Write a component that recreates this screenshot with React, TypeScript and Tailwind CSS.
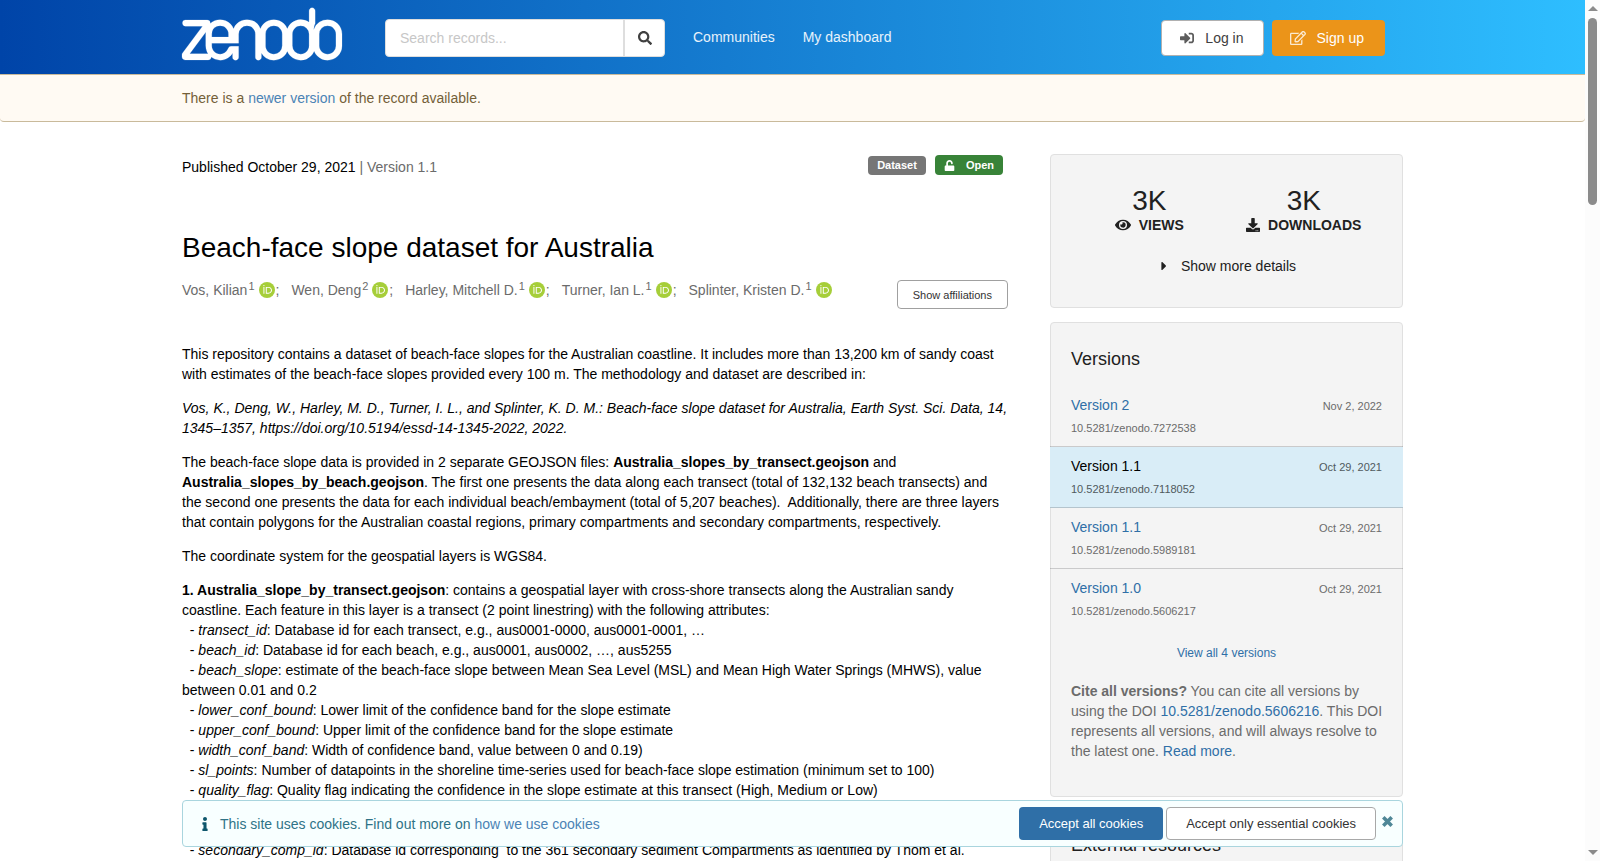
import { FaSearch, FaSignInAlt, FaRegEdit, FaUnlock, FaEye, FaDownload, FaCaretRight, FaInfo } from 'react-icons/fa';
import { SiZenodo } from 'react-icons/si';

const creators = [
  { name: 'Vos, Kilian', affiliation: 1 },
  { name: 'Wen, Deng', affiliation: 2 },
  { name: 'Harley, Mitchell D.', affiliation: 1 },
  { name: 'Turner, Ian L.', affiliation: 1 },
  { name: 'Splinter, Kristen D.', affiliation: 1 },
];

const transectFields = [
  { field: 'transect_id', text: 'Database id for each transect, e.g., aus0001-0000, aus0001-0001, …' },
  { field: 'beach_id', text: 'Database id for each beach, e.g., aus0001, aus0002, …, aus5255' },
  { field: 'beach_slope', text: 'estimate of the beach-face slope between Mean Sea Level (MSL) and Mean High Water Springs (MHWS), value between 0.01 and 0.2' },
  { field: 'lower_conf_bound', text: 'Lower limit of the confidence band for the slope estimate' },
  { field: 'upper_conf_bound', text: 'Upper limit of the confidence band for the slope estimate' },
  { field: 'width_conf_band', text: 'Width of confidence band, value between 0 and 0.19)' },
  { field: 'sl_points', text: 'Number of datapoints in the shoreline time-series used for beach-face slope estimation (minimum set to 100)' },
  { field: 'quality_flag', text: 'Quality flag indicating the confidence in the slope estimate at this transect (High, Medium or Low)' },
  { field: 'region_id', text: 'Database id of the coastal region' },
  { field: 'primary_comp_id', text: 'Database id of the primary sediment compartment' },
  { field: 'secondary_comp_id', text: 'Database id corresponding\u00a0 to the 361 secondary sediment Compartments as identified by Thom et al.' },
];

const versions = [
  { label: 'Version 2', date: 'Nov 2, 2022', doi: '10.5281/zenodo.7272538' },
  { label: 'Version 1.1', date: 'Oct 29, 2021', doi: '10.5281/zenodo.7118052', active: true },
  { label: 'Version 1.1', date: 'Oct 29, 2021', doi: '10.5281/zenodo.5989181' },
  { label: 'Version 1.0', date: 'Oct 29, 2021', doi: '10.5281/zenodo.5606217' },
];

function OrcidIcon() {
  return (
    <svg viewBox="0 0 256 256" className="inline-block size-4" aria-label="ORCID">
      <circle cx="128" cy="128" r="128" fill="#A6CE39" />
      <g fill="#fff">
        <path d="M86.3 186.2H70.9V79.1h15.4v107.1z" />
        <path d="M108.9 79.1h41.6c39.6 0 57 28.3 57 53.6 0 27.5-21.5 53.6-56.8 53.6h-41.8V79.1zm15.4 93.3h24.5c34.9 0 42.9-26.5 42.9-39.7 0-21.5-13.7-39.7-43.7-39.7h-23.7v79.4z" />
        <circle cx="78.6" cy="56.8" r="10.1" />
      </g>
    </svg>
  );
}

function Header() {
  return (
    <header className="bg-[linear-gradient(90deg,rgb(0,68,168),rgb(46,190,255))]">
      <div className="mx-auto flex h-[74px] max-w-[1221px] items-center">
        <a href="#" aria-label="Zenodo" className="mr-[43px] mb-1.5 text-white">
          <SiZenodo viewBox="0 8.1 24 7.8" strokeWidth={0.03} className="h-[52px] w-40 overflow-visible" />
        </a>
        <form className="mt-0.5 flex h-[38px] w-[280px] overflow-hidden rounded border border-[#dedede] bg-white">
          <input
            type="text"
            aria-label="Search records"
            placeholder="Search records..."
            className="min-w-0 flex-1 px-3.5 text-sm outline-none placeholder:text-[#c7c7c7]"
          />
          <button type="button" aria-label="Search" className="flex w-[41px] items-center justify-center border-l-2 border-[#dedede] text-[#404040]">
            <FaSearch className="size-3.5" />
          </button>
        </form>
        <nav className="ml-7 flex gap-7 text-sm text-white/90">
          <a href="#">Communities</a>
          <a href="#">My dashboard</a>
        </nav>
        <div className="mt-0.5 mr-[18px] ml-auto flex gap-2 text-sm">
          <button className="flex h-9 items-center gap-[11px] rounded border border-[#b0b0b0] bg-white pr-[19px] pl-[18px] text-[#404040]">
            <FaSignInAlt className="size-3.5 text-[#5c5c5c]" />
            Log in
          </button>
          <button className="flex h-9 items-center gap-[11px] rounded bg-[#eb9419] pr-[21px] pl-[18px] text-white">
            <FaRegEdit className="size-4 text-white/80" />
            Sign up
          </button>
        </div>
      </div>
    </header>
  );
}

function RecordHeader() {
  return (
    <>
      <div className="flex items-start justify-between pr-[5px]">
        <p className="mt-[3px] text-[#6b6b6b]">
          <span className="text-black">Published October 29, 2021</span> | Version 1.1
        </p>
        <div className="mt-px flex items-end gap-[9px] text-[11px] leading-[11px] font-bold text-white">
          <span className="rounded bg-[#767676] px-[9px] py-1">Dataset</span>
          <span className="flex h-5 items-center rounded bg-[#388338] px-[9px]">
            <FaUnlock className="mr-[11px] size-[11px]" />
            Open
          </span>
        </div>
      </div>

      <h1 className="mt-[53px] text-[28px] leading-9">Beach-face slope dataset for Australia</h1>

      <div className="mt-3.5 flex items-start justify-between">
        <ul className="flex gap-3 text-[#6b6b6b]">
          {creators.map((creator, i) => (
            <li key={creator.name} className="flex items-center">
              <a href="#">
                {creator.name}
                <sup className="ml-px text-[11px]">{creator.affiliation}</sup>
              </a>
              <a href="#" className="ml-1 flex">
                <OrcidIcon />
              </a>
              {i < creators.length - 1 && <span className="ml-px">;</span>}
            </li>
          ))}
        </ul>
        <button className="h-[29px] rounded border border-[#a0a0a0] px-[15px] text-[11px] text-[#333]">Show affiliations</button>
      </div>
    </>
  );
}

function Description() {
  return (
    <section className="mt-[35px] space-y-3.5">
      <p>
        This repository contains a dataset of beach-face slopes for the Australian coastline. It includes more than 13,200 km of
        sandy coast with estimates of the beach-face slopes provided every 100 m. The methodology and dataset are described in:
      </p>
      <p>
        <em>
          Vos, K., Deng, W., Harley, M. D., Turner, I. L., and Splinter, K. D. M.: Beach-face slope dataset for Australia, Earth
          Syst. Sci. Data, 14, 1345–1357, https://doi.org/10.5194/essd-14-1345-2022, 2022.
        </em>
      </p>
      <p>
        The beach-face slope data is provided in 2 separate GEOJSON files: <strong>Australia_slopes_by_transect.geojson</strong>{' '}
        and <strong>Australia_slopes_by_beach.geojson</strong>. The first one presents the data along each transect (total of
        132,132 beach transects) and the second one presents the data for each individual beach/embayment (total of 5,207
        beaches).&nbsp; Additionally, there are three layers that contain polygons for the Australian coastal regions, primary
        compartments and secondary compartments, respectively.
      </p>
      <p>The coordinate system for the geospatial layers is WGS84.</p>
      <div>
        <p>
          <strong>1. Australia_slope_by_transect.geojson</strong>: contains a geospatial layer with cross-shore transects along
          the Australian sandy coastline. Each feature in this layer is a transect (2 point linestring) with the following
          attributes:
        </p>
        {transectFields.map(({ field, text }) => (
          <p key={field}>
            &nbsp;&nbsp;- <em>{field}</em>: {text}
          </p>
        ))}
      </div>
    </section>
  );
}

function Sidebar() {
  return (
    <aside className="w-[353px] shrink-0 space-y-3.5 text-[#212121]">
      <section className="rounded border border-[#e0e0e0] bg-[#f4f4f4] px-[21px] pt-8 pb-[31px]">
        <div className="grid grid-cols-2 text-center">
          <div>
            <div className="text-[28px] leading-7">3K</div>
            <div className="flex items-center justify-center gap-2 font-bold">
              <FaEye className="size-4" />
              VIEWS
            </div>
          </div>
          <div>
            <div className="text-[28px] leading-7">3K</div>
            <div className="flex items-center justify-center gap-2 font-bold">
              <FaDownload className="size-3.5" />
              DOWNLOADS
            </div>
          </div>
        </div>
        <button className="mx-auto mt-[21px] flex items-center gap-2.5">
          <FaCaretRight className="size-3.5" />
          Show more details
        </button>
      </section>

      <section className="rounded border border-[#e0e0e0] bg-[#f4f4f4] pt-6 pb-[35px]">
        <h2 className="px-5 text-lg leading-6">Versions</h2>
        <ul className="mt-[15px]">
          {versions.map((version, i) => (
            <li
              key={version.doi}
              className={`-mx-px px-[21px] py-[9px] ${version.active ? 'bg-[#d9edf7]' : ''} ${i < versions.length - 1 ? 'border-b border-[#22242633]' : ''}`}
            >
              <div className="flex items-baseline justify-between">
                <a href="#" className={version.active ? 'text-black' : 'text-[#2f6fa7]'}>
                  {version.label}
                </a>
                <small className={`text-[11px] ${version.active ? 'text-[#505a5e]' : 'text-[#6b6b6b]'}`}>{version.date}</small>
              </div>
              <a href="#" className={`mt-[3px] block text-[11px] leading-[18px] ${version.active ? 'text-[#505a5e]' : 'text-[#6b6b6b]'}`}>
                {version.doi}
              </a>
            </li>
          ))}
        </ul>
        <div className="mt-3.5 text-center text-xs leading-5">
          <a href="#" className="text-[#2f6fa7]">View all 4 versions</a>
        </div>
        <p className="mt-[18px] pr-4 pl-5 text-[#6b6b6b]">
          <strong>Cite all versions?</strong> You can cite all versions by using the DOI{' '}
          <a href="#" className="text-[#2f6fa7]">10.5281/zenodo.5606216</a>. This DOI represents all versions, and will always
          resolve to the latest one. <a href="#" className="text-[#2f6fa7]">Read more</a>.
        </p>
      </section>

      <section className="rounded border border-[#e0e0e0] bg-[#f4f4f4] px-5 pt-[21px] pb-10">
        <h2 className="text-lg leading-6">External resources</h2>
      </section>
    </aside>
  );
}

function CookieBanner() {
  return (
    <div className="absolute inset-x-0 bottom-3.5">
      <div className="mx-auto flex h-[47px] max-w-[1221px] items-center rounded border border-[#a9d5de] bg-[#f8ffff] pr-[9px] pl-[15px] text-[#2f7387]">
        <FaInfo className="mr-2 size-3.5 text-[#0e566c]" />
        <p>
          This site uses cookies. Find out more on <a href="#" className="text-[#4b83b5]">how we use cookies</a>
        </p>
        <div className="ml-auto flex gap-[3px] text-[13px]">
          <button className="h-[33px] rounded bg-[#2f6fa7] px-5 text-white">Accept all cookies</button>
          <button className="h-[33px] rounded border border-[#a8a8a8] bg-white px-[19px] text-[#333]">Accept only essential cookies</button>
        </div>
        <button aria-label="Close" className="mb-1 ml-1.5 text-[#4f8797]">
          <svg viewBox="0 0 11 11" className="size-[11px]" stroke="currentColor" strokeWidth="3.6">
            <path d="M1.3 1.3l8.4 8.4M9.7 1.3L1.3 9.7" />
          </svg>
        </button>
      </div>
    </div>
  );
}

function Scrollbar() {
  return (
    <div className="flex w-[15px] shrink-0 flex-col items-center justify-between bg-[#fcfcfc] py-1.5">
      <div className="flex flex-col items-center gap-[7px]">
        <svg viewBox="0 0 10 5" className="h-[5px] w-2.5" fill="#8b8b8b"><path d="M5 0l5 5H0z" /></svg>
        <div className="h-[187px] w-[9px] rounded-full bg-[#8b8b8b]" />
      </div>
      <svg viewBox="0 0 10 5" className="h-[5px] w-2.5" fill="#8b8b8b"><path d="M0 0h10L5 5z" /></svg>
    </div>
  );
}

export default function App() {
  return (
    <div className="flex h-screen bg-white font-['Liberation_Sans',Arial,sans-serif] text-sm leading-5 text-black">
      <div className="relative min-w-0 flex-1">
        <div className="h-full overflow-y-auto [scrollbar-width:none]">
          <Header />
          <div className="rounded-b border border-x-0 border-[#c9ba9b] bg-[#fffaf3] py-[13px] text-[#745f38]">
            <p className="mx-auto max-w-[1221px]">
              There is a <a href="#" className="text-[#4b83b5]">newer version</a> of the record available.
            </p>
          </div>
          <div className="mx-auto flex max-w-[1221px] gap-[42px] pt-8 pb-20">
            <main className="min-w-0 flex-1">
              <RecordHeader />
              <Description />
            </main>
            <Sidebar />
          </div>
        </div>
        <CookieBanner />
      </div>
      <Scrollbar />
    </div>
  );
}
